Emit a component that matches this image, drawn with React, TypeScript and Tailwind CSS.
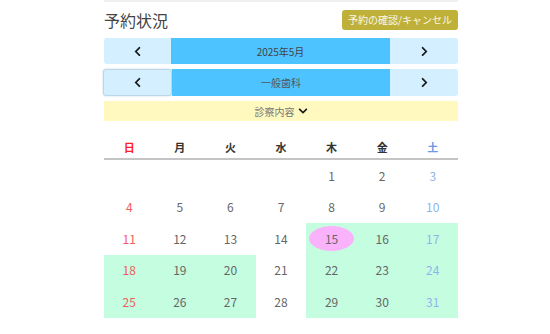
import React from "react";
import { FaChevronLeft, FaChevronRight, FaChevronDown } from "react-icons/fa";

const weeks: (number | null)[][] = [
  [null, null, null, null, 1, 2, 3],
  [4, 5, 6, 7, 8, 9, 10],
  [11, 12, 13, 14, 15, 16, 17],
  [18, 19, 20, 21, 22, 23, 24],
  [25, 26, 27, 28, 29, 30, 31],
];

const green = new Set([16, 17, 18, 19, 20, 22, 23, 24, 25, 26, 27, 29, 30, 31, 15]);

const heads = ["日", "月", "火", "水", "木", "金", "土"];

export default function App() {
  return (
    <div
      className="w-[550px] h-[334px] bg-white overflow-hidden"
      style={{ fontFamily: '"Noto Sans CJK JP", "Noto Sans", sans-serif' }}
    >
      <div className="ml-[104px] w-[354px] border-t-2 border-[#f0f0f0]">
        <div className="flex items-center justify-between h-[34px] pt-[2px]">
          <div className="text-[16px] text-[#444] leading-none">予約状況</div>
          <button className="h-[20px] px-[6px] rounded-[3px] bg-[#bfb03a] text-[#fbf8e6] text-[10px] leading-none">
            予約の確認/キャンセル
          </button>
        </div>
        <div className="mt-[2px] flex h-[26px] rounded-[3px] overflow-hidden">
          <div className="w-[67px] bg-[#d4efff] flex items-center justify-center text-[#1a1a1a]">
            <FaChevronLeft size={11} />
          </div>
          <div className="flex-1 bg-[#4dc3ff] flex items-center justify-center text-[10px] text-[#444]">
            2025年5月
          </div>
          <div className="w-[68px] bg-[#d4efff] flex items-center justify-center text-[#1a1a1a]">
            <FaChevronRight size={11} />
          </div>
        </div>
        <div className="mt-[5px] flex h-[27px] rounded-[3px]">
          <div className="w-[69px] -ml-[1px] bg-[#d4efff] border border-[#bcd6e8] rounded-[3px] shadow-[0_0_2px_#bcd6e8] flex items-center justify-center text-[#1a1a1a]">
            <FaChevronLeft size={11} />
          </div>
          <div className="flex-1 bg-[#4dc3ff] flex items-center justify-center text-[10px] text-[#555]">
            一般歯科
          </div>
          <div className="w-[68px] bg-[#d4efff] rounded-r-[3px] flex items-center justify-center text-[#1a1a1a]">
            <FaChevronRight size={11} />
          </div>
        </div>
        <div className="mt-[5px] h-[20px] bg-[#fff9bf] flex items-center justify-center gap-[3px] text-[10px] text-[#777]">
          診察内容
          <FaChevronDown size={10} className="text-[#1a1a1a]" />
        </div>
        <div className="mt-[15px] grid grid-cols-7 h-[24px] items-center border-b-2 border-[#c4c4c4] text-[11px] font-bold">
          {heads.map((h, i) => (
            <div
              key={h}
              className={
                "text-center " +
                (i === 0 ? "text-[#ff2020]" : i === 6 ? "text-[#6b9ae6]" : "text-[#333]")
              }
            >
              {h}
            </div>
          ))}
        </div>
        {weeks.map((w, wi) => (
          <div key={wi} className="grid grid-cols-7 h-[31.5px]">
            {w.map((d, i) => (
              <div
                key={i}
                className={
                  "flex items-center justify-center text-[12px] " +
                  (d !== null && green.has(d) ? "bg-[#c4fde0] " : "") +
                  (i === 0 ? "text-[#f25c5c]" : i === 6 ? "text-[#8fb4ec]" : "text-[#666]")
                }
              >
                {d === 15 ? (
                  <span className="w-[45px] h-[25px] rounded-[50%] bg-[#fab3fa] flex items-center justify-center">
                    {d}
                  </span>
                ) : (
                  d
                )}
              </div>
            ))}
          </div>
        ))}
      </div>
    </div>
  );
}
